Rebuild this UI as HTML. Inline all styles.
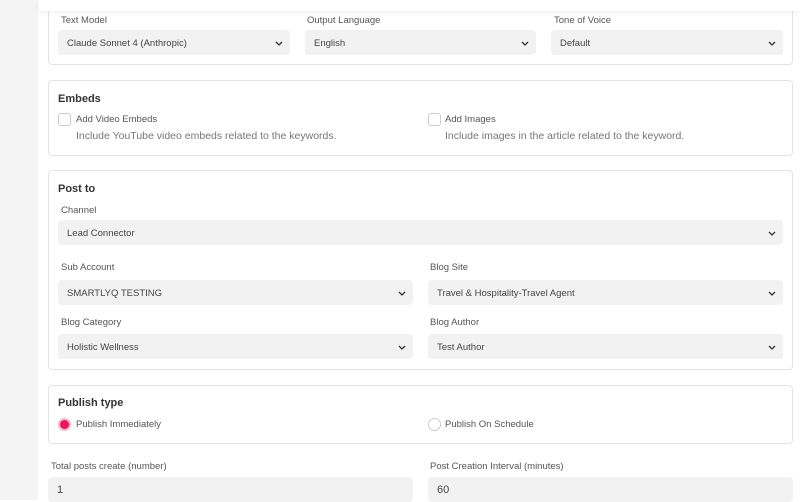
<!DOCTYPE html>
<html><head><style>
*{box-sizing:border-box;margin:0;padding:0}
body{width:800px;height:500px;overflow:hidden;background:#fff;font-family:"Liberation Sans",sans-serif;position:relative;color:#333}
.side{position:absolute;left:0;top:0;width:38px;height:500px;background:#f4f4f4}
.topbar{position:absolute;left:38px;top:0;right:0;height:11px;background:#fff;box-shadow:0 2px 4px rgba(0,0,0,.06);z-index:2}
.card{position:absolute;left:48px;width:745px;border:1px solid #e3e3e3;border-radius:4px;background:#fff}
.a{position:absolute;font-size:9.5px;color:#555}
.t{position:absolute;font-size:11px;font-weight:bold;color:#333}
.sel{position:absolute;height:25px;background:#f2f2f2;border-radius:4px;font-size:9.5px;color:#444;padding:8px 9px;white-space:nowrap}
.sel svg{position:absolute;right:7px;top:11px}
.cb{position:absolute;width:13px;height:13px;border:1px solid #ccc;border-radius:3px;background:#fff}
.d{position:absolute;font-size:10.5px;color:#777}
.rd{position:absolute;width:13px;height:13px;border-radius:50%}
</style></head><body>
<div class="side"></div>
<div class="topbar"></div>
<div class="card" style="top:-10px;height:75px"></div>
<div class="a" style="left:61px;top:15px">Text Model</div>
<div class="a" style="left:307px;top:15px">Output Language</div>
<div class="a" style="left:554px;top:15px">Tone of Voice</div>
<div class="sel" style="left:58px;top:30px;width:232px">Claude Sonnet 4 (Anthropic)<svg width="8" height="6"><path d="M1 1l3 3 3-3" stroke="#333" fill="none" stroke-width="1.3"/></svg></div>
<div class="sel" style="left:305px;top:30px;width:231px">English<svg width="8" height="6"><path d="M1 1l3 3 3-3" stroke="#333" fill="none" stroke-width="1.3"/></svg></div>
<div class="sel" style="left:551px;top:30px;width:232px">Default<svg width="8" height="6"><path d="M1 1l3 3 3-3" stroke="#333" fill="none" stroke-width="1.3"/></svg></div>

<div class="card" style="top:80px;height:76px"></div>
<div class="t" style="left:58px;top:93px">Embeds</div>
<div class="cb" style="left:58px;top:113px"></div>
<div class="a" style="left:76px;top:114px">Add Video Embeds</div>
<div class="d" style="left:76px;top:130px">Include YouTube video embeds related to the keywords.</div>
<div class="cb" style="left:428px;top:113px"></div>
<div class="a" style="left:445px;top:114px">Add Images</div>
<div class="d" style="left:445px;top:130px">Include images in the article related to the keyword.</div>

<div class="card" style="top:170px;height:200px"></div>
<div class="t" style="left:58px;top:183px">Post to</div>
<div class="a" style="left:61px;top:205px">Channel</div>
<div class="sel" style="left:58px;top:220px;width:725px">Lead Connector<svg width="8" height="6"><path d="M1 1l3 3 3-3" stroke="#333" fill="none" stroke-width="1.3"/></svg></div>
<div class="a" style="left:61px;top:262px">Sub Account</div>
<div class="a" style="left:430px;top:262px">Blog Site</div>
<div class="sel" style="left:58px;top:280px;width:355px">SMARTLYQ TESTING<svg width="8" height="6"><path d="M1 1l3 3 3-3" stroke="#333" fill="none" stroke-width="1.3"/></svg></div>
<div class="sel" style="left:428px;top:280px;width:355px">Travel &amp; Hospitality-Travel Agent<svg width="8" height="6"><path d="M1 1l3 3 3-3" stroke="#333" fill="none" stroke-width="1.3"/></svg></div>
<div class="a" style="left:61px;top:317px">Blog Category</div>
<div class="a" style="left:430px;top:317px">Blog Author</div>
<div class="sel" style="left:58px;top:334px;width:355px">Holistic Wellness<svg width="8" height="6"><path d="M1 1l3 3 3-3" stroke="#333" fill="none" stroke-width="1.3"/></svg></div>
<div class="sel" style="left:428px;top:334px;width:355px">Test Author<svg width="8" height="6"><path d="M1 1l3 3 3-3" stroke="#333" fill="none" stroke-width="1.3"/></svg></div>

<div class="card" style="top:385px;height:59px"></div>
<div class="t" style="left:58px;top:397px">Publish type</div>
<div class="rd" style="left:58px;top:418px;background:#e8175d;border:2px solid #f6b8cc"></div>
<div class="a" style="left:76px;top:419px">Publish Immediately</div>
<div class="rd" style="left:428px;top:418px;border:1px solid #ccc"></div>
<div class="a" style="left:445px;top:419px">Publish On Schedule</div>

<div class="a" style="left:51px;top:461px">Total posts create (number)</div>
<div class="a" style="left:430px;top:461px">Post Creation Interval (minutes)</div>
<div class="sel" style="left:48px;top:477px;width:365px;font-size:11px;padding:7px 9px">1</div>
<div class="sel" style="left:428px;top:477px;width:365px;font-size:11px;padding:7px 9px">60</div>
</body></html>
